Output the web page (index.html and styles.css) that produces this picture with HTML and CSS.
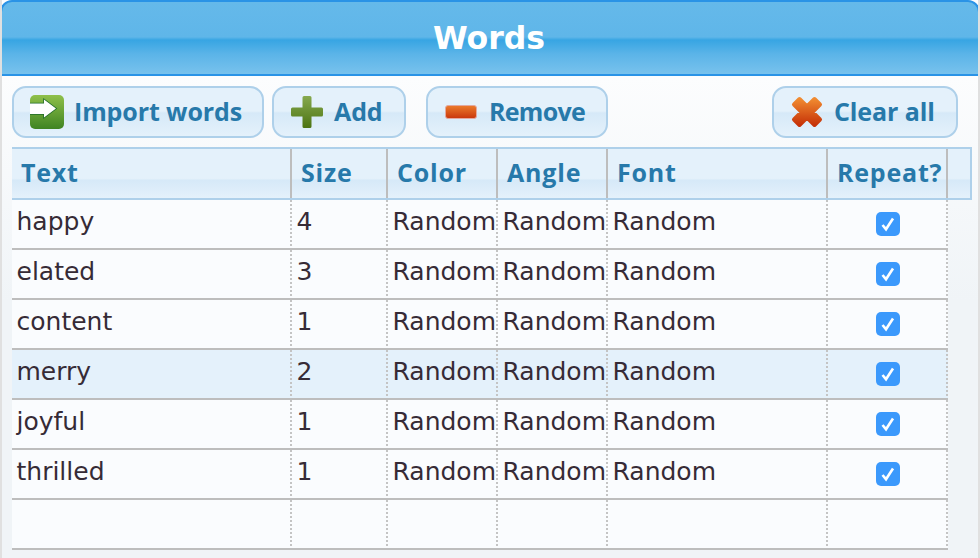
FILE: index.html
```html
<!DOCTYPE html>
<html lang="en">
<head>
<meta charset="utf-8">
<title>Words</title>
<link rel="stylesheet" href="styles.css">
</head>
<body>
<div class="panel">
  <svg class="defs" width="0" height="0" aria-hidden="true">
    <defs>
      <linearGradient id="gGreen" x1="0" y1="0" x2="0" y2="1"><stop offset="0" stop-color="#8fc04a"/><stop offset="1" stop-color="#3f8422"/></linearGradient>
      <linearGradient id="gPlus" x1="0" y1="0" x2="0" y2="1"><stop offset="0" stop-color="#86a94f"/><stop offset="1" stop-color="#4c7412"/></linearGradient>
      <linearGradient id="gMinus" x1="0" y1="0" x2="0" y2="1"><stop offset="0" stop-color="#ec7c2c"/><stop offset="1" stop-color="#c9360c"/></linearGradient>
      <linearGradient id="gCross" x1="0" y1="0" x2="0" y2="1"><stop offset="0" stop-color="#f08a30"/><stop offset="1" stop-color="#c63208"/></linearGradient>
      <symbol id="tick" viewBox="0 0 24 24"><rect width="24" height="24" rx="5" fill="#3b99fc"/><path d="M6.500 13 10 17.200 17 6.500" fill="none" stroke="#fff" stroke-width="2.600"/></symbol>
    </defs>
  </svg>
  <header class="title">Words</header>
  <div class="toolbar">
    <button class="btn btn-import" type="button">
      <svg class="icon" width="34" height="34" viewBox="0 0 34 34"><rect width="34" height="34" rx="5" fill="url(#gGreen)"/><path d="M-2 8.500H14V4.500L26 13.500 14 22.500V19H-2Z" fill="#fff" stroke="#1f6b2a" stroke-width="1.500" paint-order="stroke"/></svg>
      <span class="label">Import words</span>
    </button>
    <button class="btn btn-add" type="button">
      <svg class="icon" width="32" height="32" viewBox="0 0 32 32"><path d="M11.500 1.500a1.500 1.500 0 0 1 1.500-1.500h6a1.500 1.500 0 0 1 1.500 1.500V11.500H30.500a1.500 1.500 0 0 1 1.500 1.500v6a1.500 1.500 0 0 1-1.500 1.500H20.500V30.500a1.500 1.500 0 0 1-1.500 1.500h-6a1.500 1.500 0 0 1-1.500-1.500V20.500H1.500A1.500 1.500 0 0 1 0 19v-6a1.500 1.500 0 0 1 1.500-1.500H11.500Z" fill="url(#gPlus)"/></svg>
      <span class="label">Add</span>
    </button>
    <button class="btn btn-remove" type="button">
      <svg class="icon" width="32" height="14" viewBox="0 0 32 14"><rect x=".5" y=".5" width="31" height="13" rx="2.500" fill="url(#gMinus)" stroke="#e2a9a0"/></svg>
      <span class="label">Remove</span>
    </button>
    <button class="btn btn-clear" type="button">
      <svg class="icon" width="32" height="32" viewBox="0 0 32 32"><path d="M3 8.500 8.500 3 16 10.500 23.500 3 29 8.500 21.500 16 29 23.500 23.500 29 16 21.500 8.500 29 3 23.500 10.500 16Z" fill="url(#gCross)" stroke="url(#gCross)" stroke-width="4" stroke-linejoin="round"/></svg>
      <span class="label">Clear all</span>
    </button>
  </div>
  <div class="grid">
    <div class="head">
      <div class="hcell">Text</div>
      <div class="hcell">Size</div>
      <div class="hcell">Color</div>
      <div class="hcell">Angle</div>
      <div class="hcell">Font</div>
      <div class="hcell">Repeat?</div>
      <div class="hcell hcell-end"></div>
    </div>
    <div class="row"><div class="cell">happy</div><div class="cell">4</div><div class="cell">Random</div><div class="cell">Random</div><div class="cell">Random</div><div class="cell cell-check"><svg class="check"><use href="#tick"/></svg></div></div>
    <div class="row"><div class="cell">elated</div><div class="cell">3</div><div class="cell">Random</div><div class="cell">Random</div><div class="cell">Random</div><div class="cell cell-check"><svg class="check"><use href="#tick"/></svg></div></div>
    <div class="row"><div class="cell">content</div><div class="cell">1</div><div class="cell">Random</div><div class="cell">Random</div><div class="cell">Random</div><div class="cell cell-check"><svg class="check"><use href="#tick"/></svg></div></div>
    <div class="row row-selected"><div class="cell">merry</div><div class="cell">2</div><div class="cell">Random</div><div class="cell">Random</div><div class="cell">Random</div><div class="cell cell-check"><svg class="check"><use href="#tick"/></svg></div></div>
    <div class="row"><div class="cell">joyful</div><div class="cell">1</div><div class="cell">Random</div><div class="cell">Random</div><div class="cell">Random</div><div class="cell cell-check"><svg class="check"><use href="#tick"/></svg></div></div>
    <div class="row"><div class="cell">thrilled</div><div class="cell">1</div><div class="cell">Random</div><div class="cell">Random</div><div class="cell">Random</div><div class="cell cell-check"><svg class="check"><use href="#tick"/></svg></div></div>
    <div class="row"><div class="cell"></div><div class="cell"></div><div class="cell"></div><div class="cell"></div><div class="cell"></div><div class="cell cell-check"></div></div>
  </div>
</div>
</body>
</html>
```
FILE: styles.css
```css
* { box-sizing: border-box; }
html, body { margin: 0; height: 100%; overflow: hidden; }
body {
  font-family: "DejaVu Sans", sans-serif;
  background: linear-gradient(#fcfdfe 76px, #f0f4f7 300px);
  width: 980px;
  height: 558px;
  border-left: 2px solid #e0e0e0;
  border-right: 2px solid #e0e0e0;
}
.panel { position: relative; }
.defs { position: absolute; }
.title {
  height: 76px;
  margin: 0 -2px;
  padding-right: 2px;
  border: 2px solid #2a93e6;
  border-radius: 12px 12px 0 0;
  background: linear-gradient(#65b9ea 0, #5fb6e9 35px, #37a5e3 38px, #5bb4e8 52px, #78c2ed 72px);
  color: #fff;
  font-size: 31.500px;
  font-weight: bold;
  text-align: center;
  line-height: 72px;
}
.toolbar {
  display: flex;
  padding: 10px 20px 9px 10px;
  height: 71px;
}
.btn {
  display: flex;
  align-items: center;
  height: 52px;
  border: 2px solid #aed0ea;
  border-radius: 14px;
  background: linear-gradient(#e4f1fb 0, #e4f1fb 48%, #d6e9f8 52%, #e4f1fb 100%);
  color: #2779aa;
  font: bold 25px "Open Sans", sans-serif;
  letter-spacing: -0.100px;
  white-space: nowrap;
  padding: 0;
  flex: none;
}
.label { padding-bottom: 2px; }
.icon { flex: none; }
.btn-import { width: 252px; padding-left: 16px; gap: 10px; }
.btn-add { width: 134px; margin-left: 8px; padding-left: 17px; gap: 11px; }
.btn-remove { width: 182px; margin-left: 20px; padding-left: 17px; gap: 12px; letter-spacing: -0.700px; }
.btn-clear { width: 186px; margin-left: auto; padding-left: 17px; gap: 11px; }
.grid { margin-left: 10px; }
.head {
  display: grid;
  grid-template-columns: 280px 96px 110px 110px 220px 120px 24px;
  width: 960px;
  height: 53px;
  border: 2px solid #aed0ea;
  border-left: 0;
  background: linear-gradient(#e4f1fb 0, #e4f1fb 60%, #d6e9f8 64%, #e4f1fb 100%);
  color: #2779aa;
  font: bold 25px "Open Sans", sans-serif;
  letter-spacing: 0.800px;
}
.hcell {
  border-right: 2px solid #bdbdbd;
  padding-left: 9px;
  line-height: 46px;
  white-space: nowrap;
}
.hcell-end { border-right: 0; }
.row {
  display: grid;
  grid-template-columns: 280px 96px 110px 110px 220px 120px;
  width: 936px;
  height: 50px;
  background: #fafcfe;
  border-bottom: 2px solid #bdbdbd;
  color: #362b36;
  font-size: 25px;
}
.row-selected { background: #e4f1fb; }
.cell {
  background: repeating-linear-gradient(#c4c4c4 0 2px, transparent 2px 4px) right top / 2px 100% no-repeat;
  padding-left: 4.500px;
  line-height: 44px;
  white-space: nowrap;
  overflow: hidden;
}
.cell-check { display: flex; justify-content: center; padding: 12px 0 0; }
.check {
  display: block;
  width: 24px;
  height: 24px;
}
```
